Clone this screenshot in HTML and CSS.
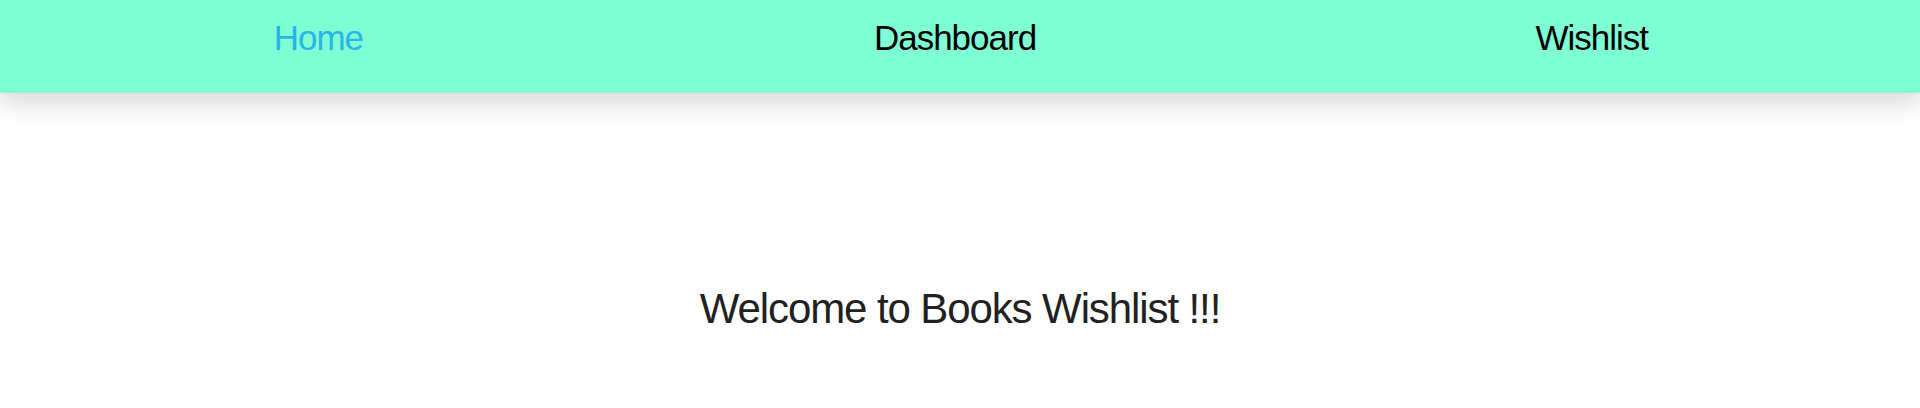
FILE: index.html
```html
<!DOCTYPE html>
<html lang="en">
<head>
<meta charset="utf-8">
<title>Books Wishlist</title>
<link rel="stylesheet" href="styles.css">
</head>
<body>
<nav class="navbar">
  <a class="nav-link active" href="#">Home</a>
  <a class="nav-link" href="#">Dashboard</a>
  <a class="nav-link" href="#">Wishlist</a>
</nav>
<main class="content">
  <p class="welcome">Welcome to Books Wishlist !!!</p>
</main>
</body>
</html>
```

FILE: styles.css
```css
html, body {
  margin: 0;
  padding: 0;
  background: #ffffff;
  font-family: "Liberation Sans", Arial, sans-serif;
}

.navbar {
  display: flex;
  height: 93px;
  box-sizing: border-box;
  padding: 18px 10px 0 0;
  background: #7fffd4;
  box-shadow: 0 10px 24px rgba(0, 0, 0, 0.16);
  position: relative;
  z-index: 1;
}

.nav-link {
  flex: 1 1 0;
  text-align: center;
  font-size: 35px;
  line-height: 40px;
  letter-spacing: -1px;
  color: #000000;
  text-decoration: none;
}

.nav-link.active {
  color: #2ab4e6;
}

.content {
  padding-top: 192px;
  text-align: center;
}

.welcome {
  margin: 0;
  font-size: 42px;
  line-height: 48px;
  letter-spacing: -1.1px;
  color: #212121;
}
```
